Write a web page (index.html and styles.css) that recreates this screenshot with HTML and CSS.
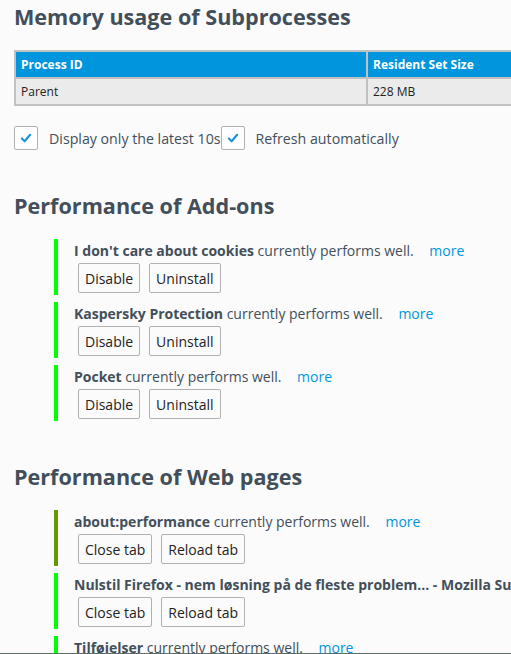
FILE: index.html
```html
<!DOCTYPE html>
<html lang="en">
<head>
  <meta charset="UTF-8">
  <title>about:performance</title>
  <link rel="stylesheet" href="styles.css">
</head>
<body>

<h1>Memory usage of Subprocesses</h1>

<table class="memory">
  <thead>
    <tr>
      <th class="col-pid">Process ID</th>
      <th>Resident Set Size</th>
    </tr>
  </thead>
  <tbody>
    <tr>
      <td>Parent</td>
      <td>228 MB</td>
    </tr>
  </tbody>
</table>

<div class="options">
  <label class="check">
    <span class="box"><svg viewBox="0 0 24 24" width="24" height="24"><path d="M7.5 12.5 L10.5 15.5 L16.5 8.5" fill="none" stroke="#1d95dc" stroke-width="2.4" stroke-linecap="round" stroke-linejoin="round"/></svg></span>
    Display only the latest 10s
  </label>
  <label class="check">
    <span class="box"><svg viewBox="0 0 24 24" width="24" height="24"><path d="M7.5 12.5 L10.5 15.5 L16.5 8.5" fill="none" stroke="#1d95dc" stroke-width="2.4" stroke-linecap="round" stroke-linejoin="round"/></svg></span>
    Refresh automatically
  </label>
</div>

<h2>Performance of Add-ons</h2>

<ul class="perf">
  <li class="item">
    <div class="desc"><b>I don't care about cookies</b> currently performs well. <a class="more">more</a></div>
    <div class="actions"><button>Disable</button><button>Uninstall</button></div>
  </li>
  <li class="item">
    <div class="desc"><b>Kaspersky Protection</b> currently performs well. <a class="more">more</a></div>
    <div class="actions"><button>Disable</button><button>Uninstall</button></div>
  </li>
  <li class="item">
    <div class="desc"><b>Pocket</b> currently performs well. <a class="more">more</a></div>
    <div class="actions"><button>Disable</button><button>Uninstall</button></div>
  </li>
</ul>

<h2>Performance of Web pages</h2>

<ul class="perf">
  <li class="item warm">
    <div class="desc"><b>about:performance</b> currently performs well. <a class="more">more</a></div>
    <div class="actions"><button>Close tab</button><button>Reload tab</button></div>
  </li>
  <li class="item">
    <div class="desc"><b>Nulstil Firefox - nem løsning på de fleste problem... - Mozilla Support</b> currently performs well. <a class="more">more</a></div>
    <div class="actions"><button>Close tab</button><button>Reload tab</button></div>
  </li>
  <li class="item">
    <div class="desc"><b>Tilføjelser</b> currently performs well. <a class="more">more</a></div>
    <div class="actions"><button>Close tab</button><button>Reload tab</button></div>
  </li>
</ul>

<div class="window-edge"></div>

</body>
</html>
```

FILE: styles.css
```css
* {
  box-sizing: border-box;
}

html, body {
  height: 100%;
  overflow: hidden;
}

body {
  margin: 0;
  padding: 0 14px;
  background: #fbfbfb;
  color: #424f5a;
  font-family: 'Open Sans', sans-serif;
  font-size: 14px;
}

h1, h2 {
  font-size: 21.6px;
  font-weight: bold;
  margin: 0;
  line-height: 30px;
}

h1 {
  margin-top: 2px;
}

h2 {
  margin-top: 41px;
}

/* subprocess memory table */
.memory {
  width: 620px;
  margin-top: 18px;
  border-collapse: collapse;
  border: 2px solid #c1c1c1;
  font-size: 12px;
}

.memory th,
.memory td {
  text-align: left;
  padding: 0 5px;
  height: 27px;
}

.memory th {
  background: #0095dd;
  color: #fff;
  font-weight: bold;
  border-right: 2px solid #c1c1c1;
  border-bottom: 2px solid #c1c1c1;
}

.memory td {
  background: #ebebeb;
  color: #222;
  border-right: 2px solid #c1c1c1;
}

.memory .col-pid {
  width: 352px;
}

/* checkboxes */
.options {
  display: flex;
  margin-top: 20px;
}

.check {
  display: flex;
  align-items: center;
  gap: 11px;
  font-size: 14.2px;
}

.box {
  width: 24px;
  height: 24px;
  border: 1px solid #b1b1b1;
  border-radius: 2px;
  background: #fff;
  display: flex;
  align-items: center;
  justify-content: center;
}

.box svg {
  display: block;
}

/* performance entries */
.perf {
  list-style: none;
  margin: 18px 0 0;
  padding: 0 0 0 40px;
}

.item {
  border-left: 4px solid #00ff00;
  padding: 0 0 3px 16px;
  height: 56px;
}

.item + .item {
  margin-top: 7px;
}

.item.warm {
  border-left-color: #669900;
}

.desc {
  white-space: nowrap;
  line-height: 24px;
}

.desc b {
  font-weight: bold;
}

.more {
  color: #0095dd;
  margin-left: 12px;
  cursor: pointer;
}

.actions {
  display: flex;
  gap: 9px;
  padding-left: 4px;
}

button {
  font-family: inherit;
  font-size: 14px;
  color: #222;
  background: #fbfbfb;
  border: 1px solid #b1b1b1;
  border-radius: 2px;
  height: 30px;
  padding: 0 6px;
}

.window-edge {
  position: fixed;
  left: 0;
  right: 0;
  bottom: 0;
  height: 1px;
  background: #5f6f68;
}
```
